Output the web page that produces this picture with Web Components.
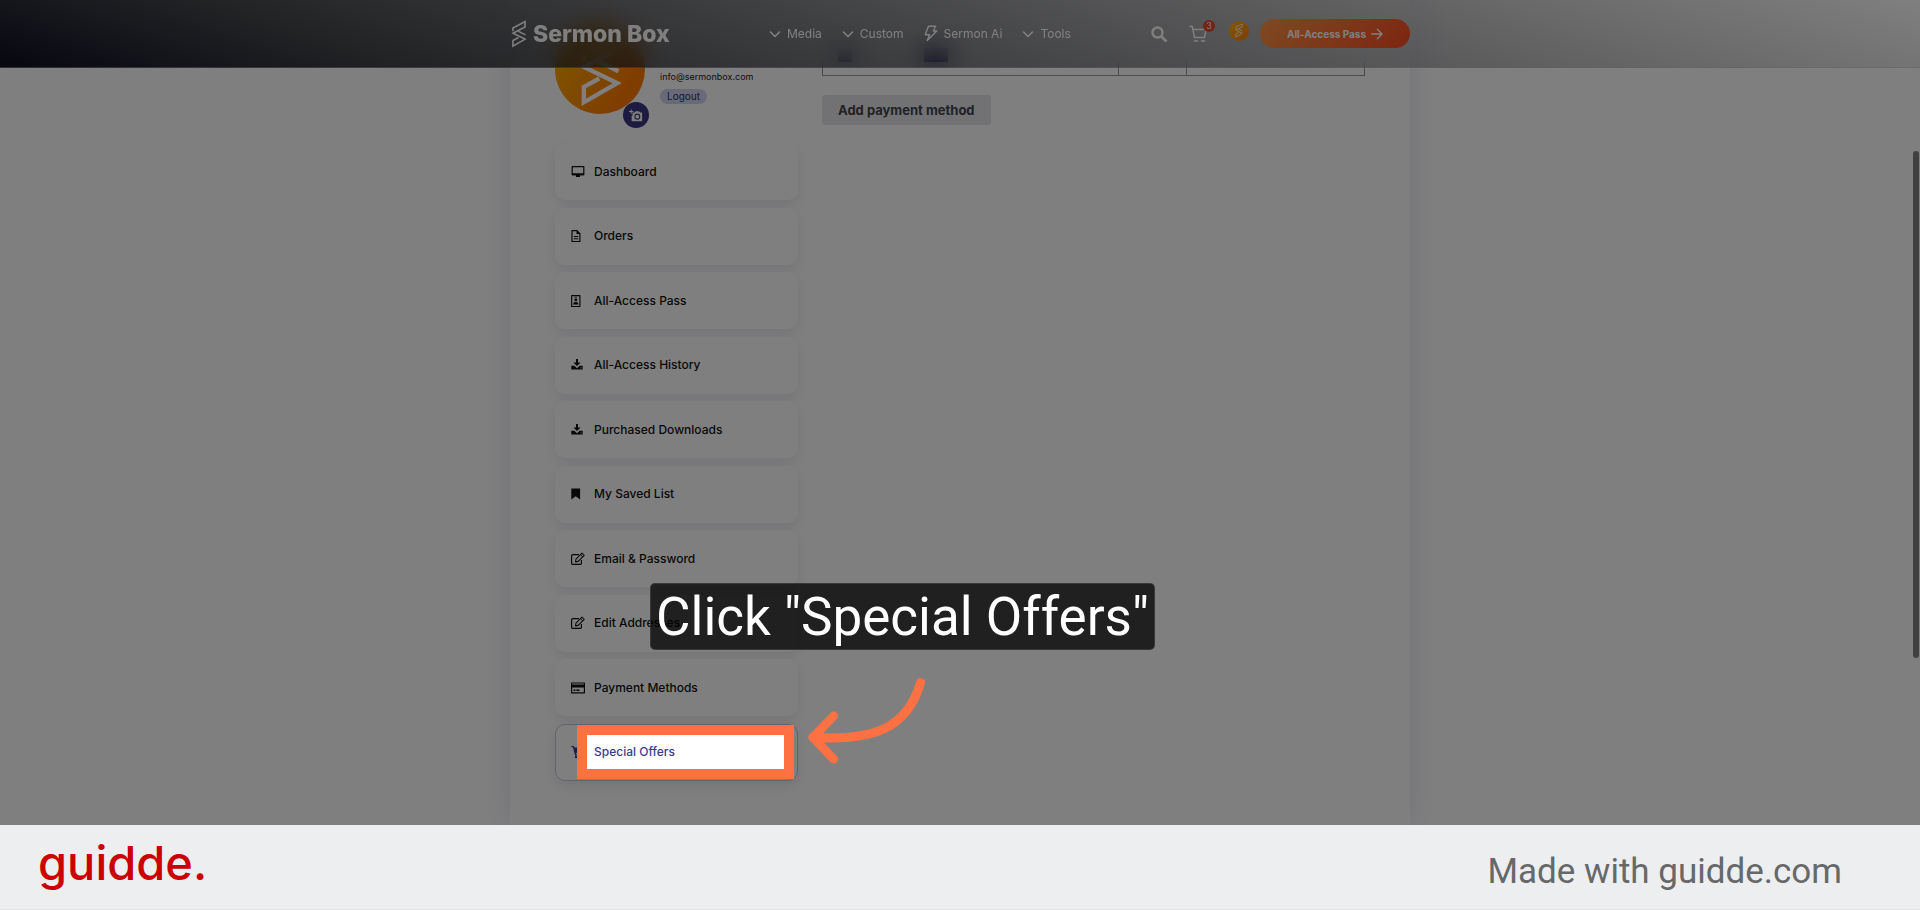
<!DOCTYPE html>
<html lang="en">
<head>
<meta charset="utf-8">
<title>My Account - Sermon Box</title>
<style>
  body {
    margin: 0;
    background: #fff;
    font-family: Inter, "Liberation Sans", sans-serif;
  }
</style>
</head>
<body>
<guide-page></guide-page>

<script>
const ICONS = {
  mark: { box: '0 0 16 30', body: '<path d="M1.500 12V8.500L14.500 1.700V7.500L1.500 14.200 14.500 20.500 1.500 28V22l6-3.300M7.500 12.200l7.500 3.700" fill="none" stroke="currentColor" stroke-width="1.700"/>' },
  chevron: { box: '0 0 12 12', body: '<path d="M1.500 4 6 8.500 10.500 4" fill="none" stroke="currentColor" stroke-width="1.600" stroke-linecap="round" stroke-linejoin="round"/>' },
  bolt: { box: '0 0 14 17', body: '<path d="M4.500 1.200h7L9.300 6h3.500L3.200 15.500 5.600 9.800H1.200Z" fill="none" stroke="currentColor" stroke-width="1.400" stroke-linejoin="round"/>' },
  search: { box: '0 0 16 16', body: '<circle cx="6.500" cy="6.500" r="5" fill="none" stroke="currentColor" stroke-width="2.400"/><path d="m10.500 10.500 4.200 4.200" stroke="currentColor" stroke-width="2.800" stroke-linecap="round"/>' },
  cart: { box: '0 0 18 18', body: '<path d="M.5 1.500h2.800L5.500 12.500h10L17 4.500H4" fill="none" stroke="currentColor" stroke-width="1.500" stroke-linejoin="round"/><path d="M5.500 16h3M12.500 16h3" stroke="currentColor" stroke-width="1.600" stroke-linecap="round"/>' },
  arrow: { box: '0 0 12 12', body: '<path d="M.8 6h10M6.300 1.200 11 6l-4.700 4.800" fill="none" stroke="currentColor" stroke-width="1.400" stroke-linecap="round" stroke-linejoin="round"/>' },
  camera: { box: '0 0 16 14', body: '<path d="M4 5.500V3.500h2.500L7.500 2h4l1 1.500H15V13.500H3V7.200h1z" fill="currentColor"/><circle cx="9.500" cy="8.300" r="2.800" fill="currentColor" stroke="#3a3682" stroke-width="1.300"/><path d="M2.500 0v5M0 2.500h5" stroke="currentColor" stroke-width="1.200"/>' },
  monitor: { box: '0 0 14 14', body: '<path d="M1.200 1.700h11.600v8H1.200z" fill="none" stroke="currentColor" stroke-width="1.200" stroke-linejoin="round"/><path d="M1 8.300h12v2H1zM5 10h4v2H5z" fill="currentColor"/>' },
  file: { box: '0 0 14 14', body: '<path d="M1 1.600h4.800L8.900 4.700v7.800H1z" fill="none" stroke="currentColor" stroke-width="1.200" stroke-linejoin="round"/><path d="M5.500 1v4h4zM2.800 7h4.400v1H2.800zM2.800 9.300h4.400v1H2.800z" fill="currentColor"/>' },
  badge: { box: '0 0 14 14', body: '<path d="M.7 1.600h8.200v10.900H.7z" fill="none" stroke="currentColor" stroke-width="1.200" stroke-linejoin="round"/><circle cx="4.800" cy="5.800" r="1.500" fill="currentColor"/><path d="M2.200 10.500C2.200 8.400 3.500 8 4.800 8s2.600.4 2.600 2.500zM3.500 2.800h2.600v.7H3.500z" fill="currentColor"/>' },
  download: { box: '0 0 14 14', body: '<path d="M5 1h2v3.500h2.600L6 8 2.400 4.500H5z" fill="currentColor"/><path d="M.3 7.800h3L6 10.200l2.700-2.400h3v3.700H.3z" fill="currentColor"/><path d="M9.600 9.800h1" stroke="#fff" stroke-width=".8"/>' },
  bookmark: { box: '0 0 14 14', body: '<path d="M.3 1.500h8.800v11L4.700 9.300.3 12.500z" fill="currentColor"/>' },
  edit: { box: '0 0 14 14', body: '<path d="M8 2.600H1.800a1.200 1.200 0 0 0-1.200 1.200v7.400a1.200 1.200 0 0 0 1.200 1.200h7.400a1.200 1.200 0 0 0 1.200-1.200V8" fill="none" stroke="currentColor" stroke-width="1.200"/><path d="m5 7.200 6-6 2.200 2.200-6 6-2.700.5z" fill="none" stroke="currentColor" stroke-width="1.100" stroke-linejoin="round"/><path d="m9.500 2.700 2.200 2.200" stroke="currentColor"/>' },
  card: { box: '0 0 14 14', body: '<path d="M.6 2h12.800v9.800H.6z" fill="none" stroke="currentColor" stroke-width="1.200" stroke-linejoin="round"/><path d="M.5 3.500h13v3H.5zM2.500 8.600h2v1.300h-2zM5.300 8.600h3.200v1.300H5.300z" fill="currentColor"/>' },
  trolley: { box: '0 0 14 14', body: '<path d="M.3 1h2.600l.4 1.500H13L11.500 8H4.800l.3 1.200h6.700v1.200H4L2 2.200H.3z" fill="currentColor"/><circle cx="5" cy="12" r="1.200" fill="currentColor"/><circle cx="10.500" cy="12" r="1.200" fill="currentColor"/>' }
};

function icon(name, width, height = width) {
  const { box, body } = ICONS[name];
  return `<svg viewBox="${box}" width="${width}" height="${height}" aria-hidden="true">${body}</svg>`;
}

/**
 * SiteHeader - translucent bar that stays over the scrolled account page
 */
class SiteHeader extends HTMLElement {
  constructor() {
    super();
    this.attachShadow({ mode: 'open' });
  }

  connectedCallback() {
    this.render();
  }

  render() {
    const links = [
      { label: 'Media', icon: 'chevron' },
      { label: 'Custom', icon: 'chevron' },
      { label: 'Sermon Ai', icon: 'bolt' },
      { label: 'Tools', icon: 'chevron' }
    ];

    this.shadowRoot.innerHTML = `
      <style>
        :host {
          display: block;
          box-sizing: border-box;
          height: 68px;
          background: linear-gradient(18deg, rgb(14, 14, 34), rgba(18, 20, 26, 0.8) 18%, rgba(20, 20, 26, 0));
          backdrop-filter: blur(12px);
          border-bottom: 1px solid rgba(160, 160, 170, 0.4);
          color: #fff;
        }
        svg { display: block; flex: none; }
        a { color: inherit; text-decoration: none; }
        .bar {
          display: flex;
          align-items: center;
          width: 900px;
          height: 67px;
          margin: 0 auto;
        }
        .logo {
          display: flex;
          align-items: center;
          gap: 6px;
          margin-left: 1px;
          width: 258px;
          font-size: 23px;
          line-height: 30px;
          font-weight: 800;
        }
        nav {
          display: flex;
          align-items: center;
          gap: 20px;
          font-size: 12px;
          line-height: 20px;
        }
        nav a { display: flex; align-items: center; gap: 6px; }
        .tools {
          display: flex;
          align-items: center;
          gap: 22px;
          margin-left: auto;
        }
        button {
          padding: 0;
          border: 0;
          background: none;
          color: inherit;
        }
        .cart { position: relative; }
        .count {
          position: absolute;
          top: -5px;
          right: -8px;
          width: 12px;
          border-radius: 6px;
          background: #e04a2c;
          font-size: 9px;
          line-height: 12px;
          text-align: center;
        }
        .avatar {
          display: grid;
          place-items: center;
          width: 20px;
          height: 20px;
          border-radius: 50%;
          background: linear-gradient(135deg, #ffb400, #ff7a00);
          margin-bottom: 6px;
        }
        .pass {
          display: flex;
          align-items: center;
          justify-content: center;
          gap: 5px;
          width: 150px;
          height: 29px;
          margin-left: 11px;
          border-radius: 15px;
          background: linear-gradient(135deg, #fa9444, #fa4c22);
          font-size: 10px;
          line-height: 16px;
          font-weight: 700;
        }
      </style>
      <div class="bar">
        <a class="logo" href="#home">${icon('mark', 16, 28)}<span>Sermon Box</span></a>
        <nav>
          ${links.map(link => `
            <a href="#${link.label}">${icon(link.icon, link.icon === 'bolt' ? 14 : 12, link.icon === 'bolt' ? 17 : 12)}${link.label}</a>
          `).join('')}
        </nav>
        <div class="tools">
          <button aria-label="Search">${icon('search', 16)}</button>
          <a class="cart" href="#cart" aria-label="Cart">${icon('cart', 18)}<span class="count">3</span></a>
          <a class="avatar" href="#account" aria-label="Account">${icon('mark', 8, 15)}</a>
        </div>
        <a class="pass" href="#pass">All-Access Pass ${icon('arrow', 12)}</a>
      </div>
    `;
  }
}

/**
 * ProfileCard - avatar, e-mail and logout link
 * @attr {string} email
 */
class ProfileCard extends HTMLElement {
  constructor() {
    super();
    this.attachShadow({ mode: 'open' });
  }

  connectedCallback() {
    this.shadowRoot.innerHTML = `
      <style>
        :host { display: flex; gap: 15px; height: 90px; }
        svg { display: block; }
        .avatar {
          position: relative;
          display: grid;
          place-items: center;
          width: 90px;
          height: 90px;
          border-radius: 50%;
          background: linear-gradient(120deg, #ffb000, #ff7a00 80%);
          color: #fff;
        }
        .photo {
          position: absolute;
          right: -4px;
          bottom: -14px;
          display: grid;
          place-items: center;
          width: 26px;
          height: 26px;
          padding: 0;
          border: 0;
          border-radius: 50%;
          background: #3a3682;
          color: #fff;
        }
        .info {
          display: flex;
          flex-direction: column;
          align-items: flex-start;
          gap: 4px;
          padding-top: 45px;
          color: #222;
          font-size: 9px;
          line-height: 16px;
        }
        .info a {
          padding: 0 7px;
          border-radius: 8px;
          background: #d0d4ee;
          color: #2f2c78;
          font-size: 10px;
          line-height: 15px;
          text-decoration: none;
        }
      </style>
      <div class="avatar">
        ${icon('mark', 41, 78)}
        <button class="photo" aria-label="Change photo">${icon('camera', 14, 13)}</button>
      </div>
      <div class="info">
        <span>${this.getAttribute('email')}</span>
        <a href="#logout">Logout</a>
      </div>
    `;
  }
}

/**
 * AccountLink - one card of the account menu, label passed in the slot
 * @attr {string} icon - key of ICONS
 * @attr {boolean} active
 */
class AccountLink extends HTMLElement {
  constructor() {
    super();
    this.attachShadow({ mode: 'open' });
  }

  connectedCallback() {
    this.shadowRoot.innerHTML = `
      <style>
        :host { display: block; }
        a {
          display: flex;
          align-items: center;
          gap: 9px;
          box-sizing: border-box;
          height: 57px;
          padding: 0 15px;
          border: 1px solid transparent;
          border-radius: 10px;
          background: #fff;
          box-shadow: 0 5px 12px rgba(60, 60, 120, 0.11);
          color: #111;
          font-size: 12px;
          line-height: 18px;
          font-weight: 500;
          text-decoration: none;
        }
        :host([active]) a { border-color: #c4c6da; color: #3d3a8c; }
      </style>
      <a href="#${this.getAttribute('icon')}">${icon(this.getAttribute('icon'), 14)}<slot></slot></a>
    `;
  }
}

/**
 * PaymentMethods - end of the saved methods table and the add button
 */
class PaymentMethods extends HTMLElement {
  constructor() {
    super();
    this.attachShadow({ mode: 'open' });
  }

  connectedCallback() {
    this.shadowRoot.innerHTML = `
      <style>
        :host { display: block; }
        .chips {
          display: flex;
          align-items: flex-end;
          gap: 72px;
          box-sizing: border-box;
          height: 62px;
          padding-left: 16px;
        }
        .chip { width: 14px; height: 14px; background: #4a6390; }
        .chip.dark { width: 24px; background: #1c1c6c; }
        table {
          width: 100%;
          height: 14px;
          table-layout: fixed;
          border-collapse: collapse;
        }
        td { padding: 0; border: 1px solid #96969c; border-top: 0; }
        .method { width: 295px; }
        .expires { width: 67px; }
        button {
          display: block;
          height: 30px;
          margin-top: 19px;
          padding: 0 16px;
          border: 0;
          border-radius: 3px;
          background: #e4e5ea;
          color: #444;
          font: 700 13px/20px Inter, "Liberation Sans", sans-serif;
        }
      </style>
      <div class="chips"><span class="chip"></span><span class="chip dark"></span></div>
      <table>
        <tr>
          <td class="method"></td>
          <td class="expires"></td>
          <td></td>
        </tr>
      </table>
      <button>Add payment method</button>
    `;
  }
}

/**
 * AccountPage - white panel with the menu on the left and content on the right
 */
class AccountPage extends HTMLElement {
  constructor() {
    super();
    this.attachShadow({ mode: 'open' });
  }

  connectedCallback() {
    const items = [
      ['monitor', 'Dashboard'],
      ['file', 'Orders'],
      ['badge', 'All-Access Pass'],
      ['download', 'All-Access History'],
      ['download', 'Purchased Downloads'],
      ['bookmark', 'My Saved List'],
      ['edit', 'Email &amp; Password'],
      ['edit', 'Edit Addresses'],
      ['card', 'Payment Methods'],
      ['trolley', 'Special Offers']
    ];

    this.shadowRoot.innerHTML = `
      <style>
        :host {
          display: grid;
          grid-template-columns: 243px 1fr;
          gap: 24px;
          box-sizing: border-box;
          width: 900px;
          margin: 0 auto;
          padding: 0 45px 44px;
          background: #fff;
          box-shadow: 0 0 26px rgba(80, 80, 170, 0.16);
        }
        aside { padding-top: 24px; }
        nav {
          display: flex;
          flex-direction: column;
          justify-content: space-between;
          height: 638px;
          margin-top: 29px;
        }
      </style>
      <aside>
        <profile-card email="info@sermonbox.com"></profile-card>
        <nav>
          ${items.map(([name, label], i) => `
            <account-link icon="${name}" ${i === items.length - 1 ? 'active' : ''}>${label}</account-link>
          `).join('')}
        </nav>
      </aside>
      <payment-methods></payment-methods>
    `;
  }
}

/**
 * GuideStep - dims everything but the highlighted link, with caption and arrow
 */
class GuideStep extends HTMLElement {
  constructor() {
    super();
    this.attachShadow({ mode: 'open' });
  }

  connectedCallback() {
    this.shadowRoot.innerHTML = `
      <style>
        :host {
          position: absolute;
          inset: 0;
          overflow: hidden;
          pointer-events: none;
        }
        .target {
          position: absolute;
          top: 725px;
          left: calc(50% - 383px);
          box-sizing: border-box;
          width: 217px;
          height: 54px;
          border: 10px solid #ff7043;
          box-shadow: 0 0 0 3000px rgba(0, 0, 0, 0.5);
        }
        .caption {
          position: absolute;
          top: 583px;
          left: calc(50% - 310px);
          box-sizing: border-box;
          height: 67px;
          padding: 0 5px;
          border: 1px solid rgba(80, 80, 80, 0.5);
          border-radius: 5px;
          background: rgba(0, 0, 0, 0.75);
          color: #fff;
          font: 53px/66px Roboto, sans-serif;
          white-space: nowrap;
        }
        .arrow {
          position: absolute;
          top: 670px;
          left: calc(50% - 160px);
        }
        .thumb {
          position: absolute;
          top: 151px;
          right: 1px;
          width: 6px;
          height: 507px;
          border-radius: 3px;
          background: #404040;
        }
      </style>
      <div class="target"></div>
      <div class="thumb"></div>
      <div class="caption"><slot></slot></div>
      <svg class="arrow" width="130" height="100" viewBox="0 0 130 100" aria-hidden="true">
        <path d="M120.500 12.500C108 57 74 72 13 67M33.500 46 13 67.500 33.500 89" fill="none" stroke="#ff7043" stroke-width="9" stroke-linecap="round" stroke-linejoin="round"/>
      </svg>
    `;
  }
}

/**
 * GuideFooter - branding strip below the step
 */
class GuideFooter extends HTMLElement {
  constructor() {
    super();
    this.attachShadow({ mode: 'open' });
  }

  connectedCallback() {
    this.shadowRoot.innerHTML = `
      <style>
        :host {
          display: flex;
          align-items: center;
          justify-content: space-between;
          box-sizing: border-box;
          height: 85px;
          padding: 0 78px 0 38px;
          border-bottom: 1px solid #e1e2e4;
          background: #edeef0;
        }
        .brand {
          padding-bottom: 8px;
          color: #c00;
          font: 500 47px/60px Inter, sans-serif;
        }
        .credit {
          padding-top: 10px;
          color: #666869;
          font: 35px/40px Roboto, sans-serif;
        }
      </style>
      <span class="brand">guidde.</span>
      <span class="credit">Made with guidde.com</span>
    `;
  }
}

/**
 * GuidePage - stacks the captured page, the step overlay and the footer
 */
class GuidePage extends HTMLElement {
  constructor() {
    super();
    this.attachShadow({ mode: 'open' });
  }

  connectedCallback() {
    this.shadowRoot.innerHTML = `
      <style>
        :host { display: flex; flex-direction: column; min-height: 100vh; }
        .stage { position: relative; display: flex; flex: 1; overflow: hidden; }
        site-header { position: absolute; top: 0; left: 0; right: 0; }
      </style>
      <div class="stage">
        <account-page></account-page>
        <site-header></site-header>
        <guide-step>Click "Special Offers"</guide-step>
      </div>
      <guide-footer></guide-footer>
    `;
  }
}

customElements.define('site-header', SiteHeader);
customElements.define('profile-card', ProfileCard);
customElements.define('account-link', AccountLink);
customElements.define('payment-methods', PaymentMethods);
customElements.define('account-page', AccountPage);
customElements.define('guide-step', GuideStep);
customElements.define('guide-footer', GuideFooter);
customElements.define('guide-page', GuidePage);
</script>
</body>
</html>
